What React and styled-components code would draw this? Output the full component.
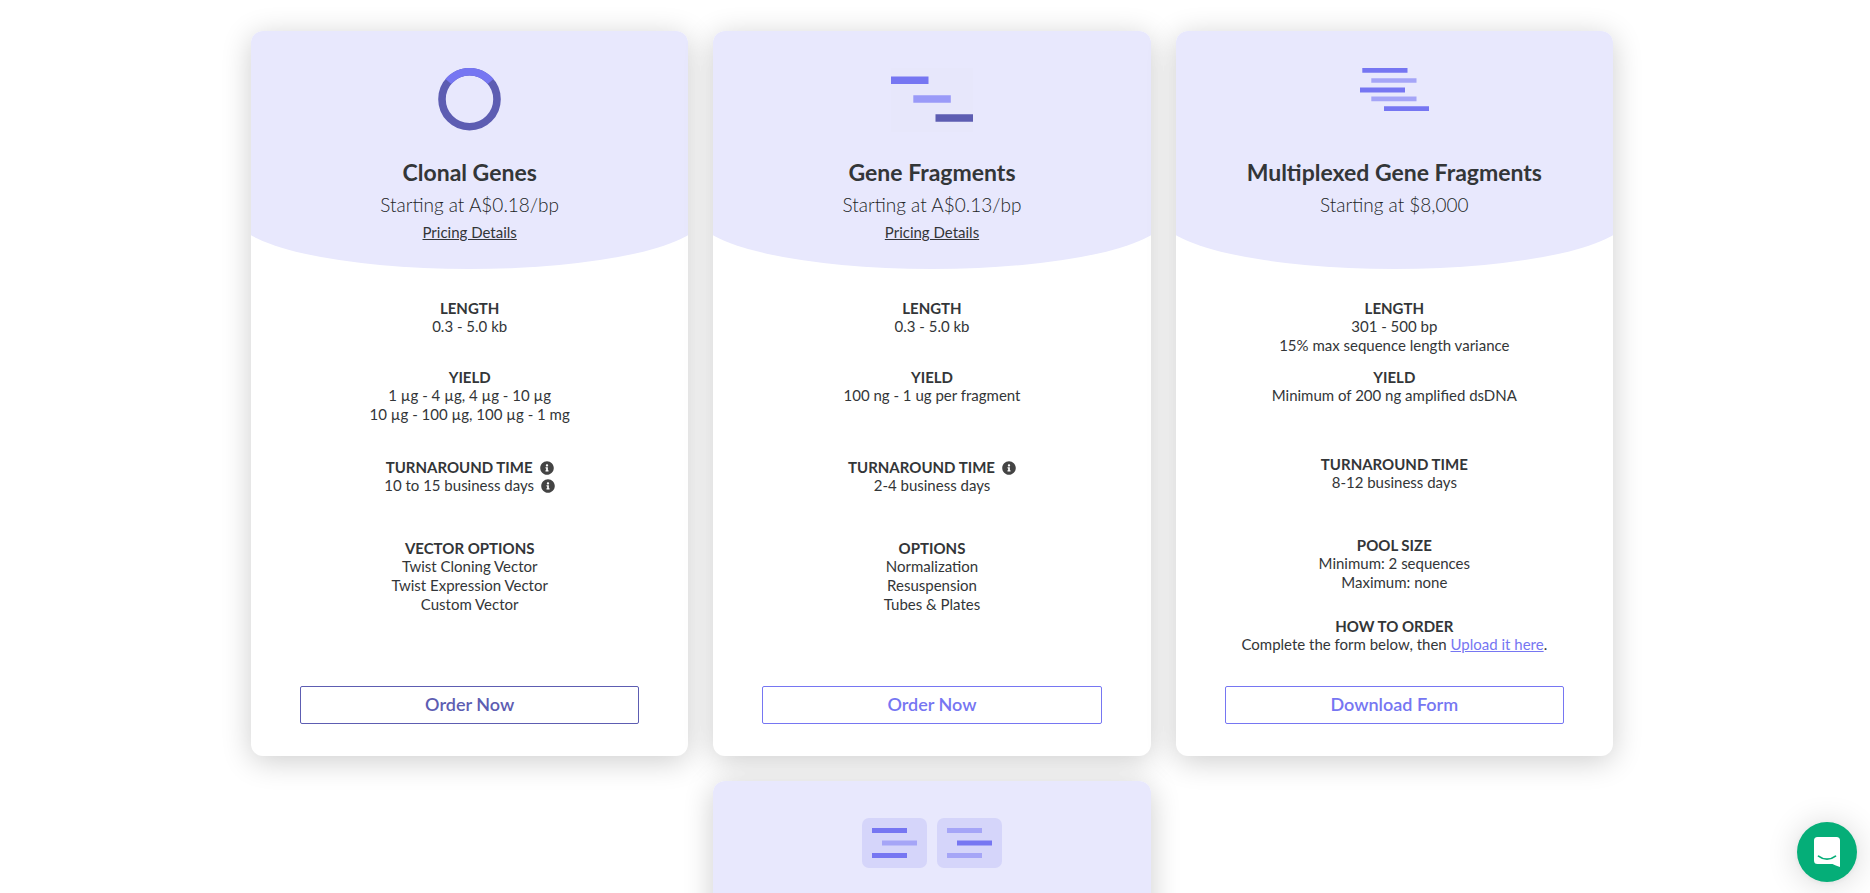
import React from 'react'
import styled, { createGlobalStyle } from 'styled-components'
import { FaInfoCircle } from 'react-icons/fa'

export default function App() {
  return (
    <Page>
      <GlobalStyle />
      <Cards>
        {products.map((product) => (
          <ProductCard key={product.title} product={product} />
        ))}
        <Card>
          <Header>
            <IconBox><PoolsIcon /></IconBox>
          </Header>
        </Card>
      </Cards>
      <ChatButton type="button" aria-label="Open chat">
        <ChatIcon />
      </ChatButton>
    </Page>
  )
}

function ProductCard({ product }) {
  const { Icon, title, price, pricing, specs, action, dark } = product
  return (
    <Card>
      <Header>
        <IconBox><Icon /></IconBox>
        <Title>{title}</Title>
        <Price>{price}</Price>
        {pricing && <PricingLink href="#pricing">Pricing Details</PricingLink>}
      </Header>
      <Specs>
        {specs.map((spec) => (
          <Spec key={spec.name} $height={spec.height}>
            <SpecName>
              {spec.name}
              {spec.info && <InfoIcon />}
            </SpecName>
            {spec.lines.map((line, i) => (
              <SpecLine key={i}>{line}</SpecLine>
            ))}
          </Spec>
        ))}
      </Specs>
      <OrderButton type="button" $dark={dark}>{action}</OrderButton>
    </Card>
  )
}

const RingIcon = () => (
  <svg width="63" height="63" viewBox="0 0 63 63" fill="none" strokeWidth="7.6">
    <circle cx="31.5" cy="31.2" r="27.5" stroke="#5d5db2" />
    <path d="M10.4 13.5A27.5 27.5 0 0 1 52.6 13.5" stroke="#7676f2" />
  </svg>
)

const FragmentsIcon = () => (
  <svg width="82" height="64" viewBox="0 0 82 64">
    <path fill="#e7e7fb" d="M0 0h82v64H0z" />
    <path fill="#7676f2" d="M0 8.6h37.5v7.5H0z" />
    <path fill="#9a9af8" d="M22.3 27.3h37.5v7.5H22.3z" />
    <path fill="#5d5db2" d="M44.5 46.2H82v7.5H44.5z" />
  </svg>
)

const MultiplexedIcon = () => (
  <svg width="69" height="43" viewBox="0 0 69 43">
    <path fill="#7676f2" d="M2.3 0h45.2v4.8H2.3zM0 19.5h45v5H0zM24 38.2h45v4.8H24z" />
    <path fill="#a5a5f7" d="M11.3 10.2h45.2v4.6H11.3zM11.3 28.4h45.2v4.8H11.3z" />
  </svg>
)

const PoolsIcon = () => (
  <svg width="140" height="50" viewBox="0 0 140 50">
    <rect width="65" height="50" rx="7" fill="#d5d5fa" />
    <rect x="75" width="65" height="50" rx="7" fill="#d5d5fa" />
    <path fill="#7676f2" d="M10 10h35v5H10zM10 35h35v5H10zM95 22.4h35v5H95z" />
    <path fill="#a5a5f7" d="M20 22.4h35v5H20zM85 10h35v5H85zM85 35h35v5H85z" />
  </svg>
)

const ChatIcon = () => (
  <svg width="26" height="30" viewBox="0 0 26 30">
    <path fill="#fff" d="M3.5 0h19A3.5 3.5 0 0 1 26 3.5V30c-3-.9-5.6-1.9-7.5-3h-15A3.5 3.5 0 0 1 0 23.5v-20A3.5 3.5 0 0 1 3.5 0z" />
    <path fill="none" stroke="#05ae78" strokeWidth="1.7" strokeLinecap="round" d="M4.5 19.2c5 4 12 4 17 0" />
  </svg>
)

const GlobalStyle = createGlobalStyle`
  body {
    margin: 0;
    background: #fff;
    color: #333638;
    font-family: Lato, "Liberation Sans", sans-serif;
  }
`

const Page = styled.main`
  box-sizing: border-box;
  height: 100vh;
  overflow-y: auto;
  scrollbar-width: none;
  padding: 31px 22px 31px 16px;
`

const Cards = styled.div`
  display: flex;
  flex-wrap: wrap;
  justify-content: center;
  gap: 25px;
  max-width: 1362px;
  margin: 0 auto;
`

const Card = styled.section`
  box-sizing: border-box;
  display: flex;
  flex-direction: column;
  flex: 0 1 calc((100% - 50px) / 3);
  min-width: 320px;
  min-height: 725px;
  padding-bottom: 32px;
  overflow: hidden;
  border-radius: 12px;
  background: #fff;
  box-shadow: 0 5px 30px rgba(0, 0, 0, 0.2);
  text-align: center;
`

/* wider than the card, so the curve is cut by its sides */
const Header = styled.header`
  box-sizing: border-box;
  min-height: 238px;
  margin: 0 -16px;
  padding-top: 37px;
  border-radius: 0 0 50% 50% / 0 0 53px 53px;
  background: #e8e8fd;
`

const IconBox = styled.div`
  display: flex;
  justify-content: center;
  align-items: flex-start;
  height: 90px;
`

const Title = styled.h2`
  margin: 0;
  font-size: 23px;
  font-weight: 700;
  line-height: 28px;
`

const Price = styled.p`
  margin: 5px 0 3px;
  color: #222527;
  font-size: 19px;
  font-weight: 300;
  line-height: 28px;
`

const PricingLink = styled.a`
  display: inline-block;
  color: inherit;
  font-size: 15px;
  line-height: 19px;
`

const Specs = styled.div`
  flex: 1;
  padding-top: 30px;
`

const Spec = styled.div`
  min-height: ${(props) => props.$height}px;
  font-size: 15px;
  line-height: 19px;
`

const SpecName = styled.h3`
  margin: 0;
  font-size: 15px;
  font-weight: 700;
  line-height: 18px;
`

const SpecLine = styled.p`
  margin: 0;
`

const InfoIcon = styled(FaInfoCircle)`
  width: 14px;
  height: 14px;
  margin-left: 7px;
  color: #444;
  vertical-align: -2px;
`

const UploadLink = styled.a`
  color: #7676f2;
`

const OrderButton = styled.button`
  height: 38px;
  margin: 0 49px;
  padding: 0 0 3px;
  border: 1px solid;
  border-color: currentColor;
  border-radius: 2px;
  background: #fff;
  color: ${(props) => (props.$dark ? '#5d5db2' : '#7676f2')};
  font-family: inherit;
  font-size: 18px;
  font-weight: 600;
  cursor: pointer;
`

const ChatButton = styled.button`
  position: fixed;
  right: 13px;
  bottom: 11px;
  display: flex;
  justify-content: center;
  align-items: center;
  width: 60px;
  height: 60px;
  padding: 0;
  border: 0;
  border-radius: 50%;
  background: #05ae78;
  box-shadow: 0 1px 6px rgba(0, 0, 0, 0.06), 0 2px 32px rgba(0, 0, 0, 0.16);
  cursor: pointer;
`

const products = [
  {
    title: 'Clonal Genes',
    price: 'Starting at A$0.18/bp',
    pricing: true,
    Icon: RingIcon,
    action: 'Order Now',
    dark: true,
    specs: [
      { name: 'LENGTH', height: 69, lines: ['0.3 - 5.0 kb'] },
      { name: 'YIELD', height: 90, lines: ['1 µg - 4 µg, 4 µg - 10 µg', '10 µg - 100 µg, 100 µg - 1 mg'] },
      { name: 'TURNAROUND TIME', height: 81, info: true, lines: [<>10 to 15 business days<InfoIcon /></>] },
      { name: 'VECTOR OPTIONS', height: 81, lines: ['Twist Cloning Vector', 'Twist Expression Vector', 'Custom Vector'] },
    ],
  },
  {
    title: 'Gene Fragments',
    price: 'Starting at A$0.13/bp',
    pricing: true,
    Icon: FragmentsIcon,
    action: 'Order Now',
    specs: [
      { name: 'LENGTH', height: 69, lines: ['0.3 - 5.0 kb'] },
      { name: 'YIELD', height: 90, lines: ['100 ng - 1 ug per fragment'] },
      { name: 'TURNAROUND TIME', height: 81, info: true, lines: ['2-4 business days'] },
      { name: 'OPTIONS', height: 81, lines: ['Normalization', 'Resuspension', 'Tubes & Plates'] },
    ],
  },
  {
    title: 'Multiplexed Gene Fragments',
    price: 'Starting at $8,000',
    Icon: MultiplexedIcon,
    action: 'Download Form',
    specs: [
      { name: 'LENGTH', height: 69, lines: ['301 - 500 bp', '15% max sequence length variance'] },
      { name: 'YIELD', height: 87, lines: ['Minimum of 200 ng amplified dsDNA'] },
      { name: 'TURNAROUND TIME', height: 81, lines: ['8-12 business days'] },
      { name: 'POOL SIZE', height: 81, lines: ['Minimum: 2 sequences', 'Maximum: none'] },
      {
        name: 'HOW TO ORDER',
        height: 38,
        lines: [<>Complete the form below, then <UploadLink href="#upload">Upload it here</UploadLink>.</>],
      },
    ],
  },
]
